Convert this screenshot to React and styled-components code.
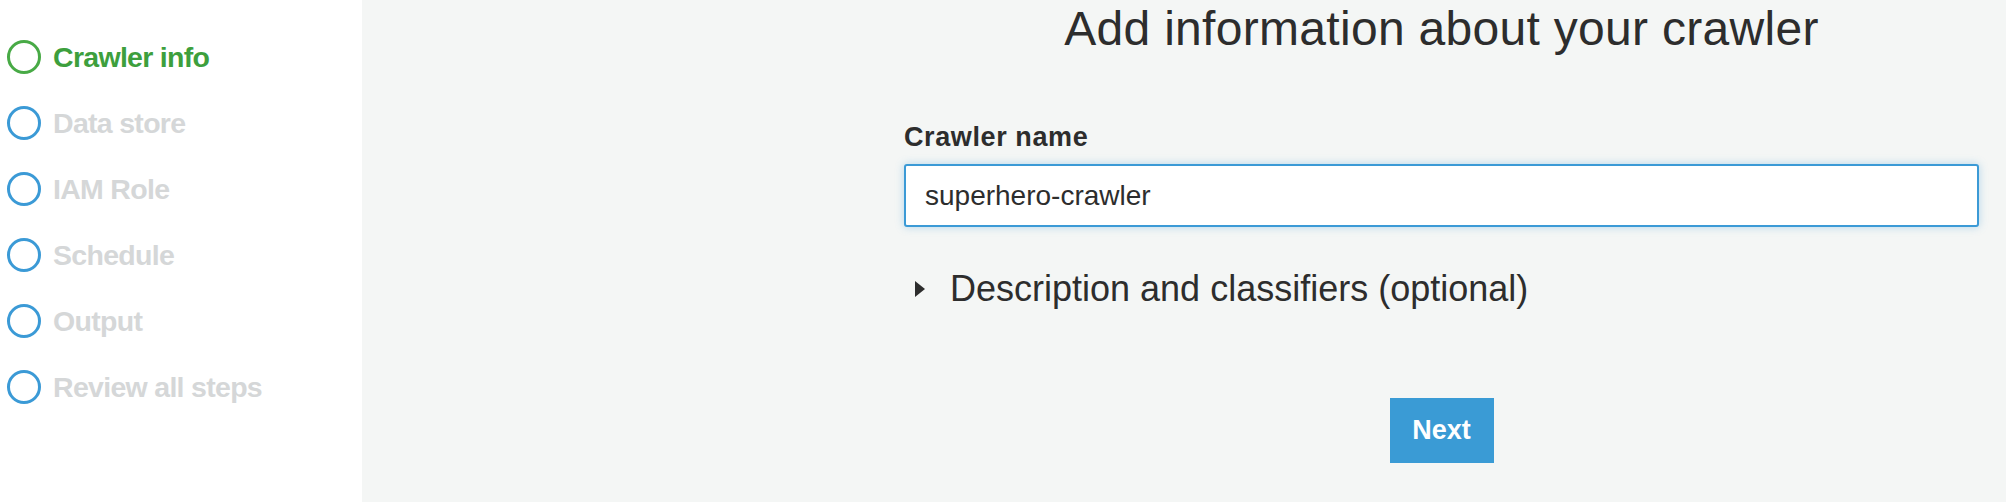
import React from "react";
import styled, { createGlobalStyle } from "styled-components";

const Global = createGlobalStyle`
  html, body { margin: 0; padding: 0; height: 100%; }
  body { font-family: "Liberation Sans", Arial, sans-serif; background: #f4f6f5; }
  #root { height: 100%; }
  * { box-sizing: border-box; }
`;

const Page = styled.div`
  display: flex;
  min-height: 100vh;
  background: #f4f6f5;
`;

const Sidebar = styled.nav`
  width: 362px;
  flex: 0 0 362px;
  background: #ffffff;
  padding: 24px 0 0 7px;
  display: flex;
  flex-direction: column;
`;

const Step = styled.div`
  height: 66px;
  display: flex;
  align-items: center;
  gap: 12px;
`;

const StepCircle = styled.span`
  width: 34px;
  height: 34px;
  border-radius: 50%;
  border: 3px solid ${(p) => (p.$active ? "#48aa46" : "#3b9ad6")};
  flex: 0 0 34px;
`;

const StepLabel = styled.span`
  font-size: 28.5px;
  font-weight: 700;
  letter-spacing: -0.7px;
  color: ${(p) => (p.$active ? "#3d9f3d" : "#d5d7d8")};
  line-height: 34px;
`;

const Main = styled.main`
  flex: 1;
  padding: 0 27px 0 542px;
`;

const Form = styled.div`
  display: flex;
  flex-direction: column;
`;

const Title = styled.h1`
  margin: 2px 0 0;
  font-size: 48px;
  line-height: 54px;
  font-weight: 400;
  letter-spacing: 0.3px;
  color: #2d2d2d;
  text-align: center;
`;

const FieldLabel = styled.label`
  margin-top: 66px;
  font-size: 27px;
  line-height: 30px;
  font-weight: 700;
  letter-spacing: 0.6px;
  color: #2d2d2d;
`;

const TextInput = styled.input`
  margin-top: 12px;
  height: 63px;
  width: 100%;
  border: 2px solid #3b9ad6;
  border-radius: 3px;
  background: #ffffff;
  box-shadow: 0 0 8px rgba(59, 154, 214, 0.35);
  padding: 0 0 0 19px;
  font-family: "Liberation Sans", Arial, sans-serif;
  font-size: 28px;
  color: #2d2d2d;
  outline: none;
`;

const Expander = styled.div`
  margin-top: 41px;
  display: flex;
  align-items: center;
  gap: 25px;
  padding-left: 11px;
  height: 42px;
`;

const Caret = styled.span`
  width: 0;
  height: 0;
  border-top: 8px solid transparent;
  border-bottom: 8px solid transparent;
  border-left: 10px solid #2d2d2d;
`;

const ExpanderText = styled.span`
  font-size: 36px;
  line-height: 42px;
  color: #2d2d2d;
`;

const Actions = styled.div`
  margin-top: 88px;
  display: flex;
  justify-content: center;
`;

const PrimaryButton = styled.button`
  width: 104px;
  height: 65px;
  border: none;
  border-radius: 0;
  background: #3a9bd5;
  color: #ffffff;
  font-family: "Liberation Sans", Arial, sans-serif;
  font-size: 27px;
  font-weight: 700;
  padding: 0;
  cursor: pointer;
`;

const steps = [
  "Crawler info",
  "Data store",
  "IAM Role",
  "Schedule",
  "Output",
  "Review all steps",
];

export default function App() {
  return (
    <>
      <Global />
      <Page>
        <Sidebar>
          {steps.map((s, i) => (
            <Step key={s}>
              <StepCircle $active={i === 0} />
              <StepLabel $active={i === 0}>{s}</StepLabel>
            </Step>
          ))}
        </Sidebar>
        <Main>
          <Form>
            <Title>Add information about your crawler</Title>
            <FieldLabel htmlFor="crawler-name">Crawler name</FieldLabel>
            <TextInput id="crawler-name" defaultValue="superhero-crawler" />
            <Expander>
              <Caret />
              <ExpanderText>Description and classifiers (optional)</ExpanderText>
            </Expander>
            <Actions>
              <PrimaryButton>Next</PrimaryButton>
            </Actions>
          </Form>
        </Main>
      </Page>
    </>
  );
}
